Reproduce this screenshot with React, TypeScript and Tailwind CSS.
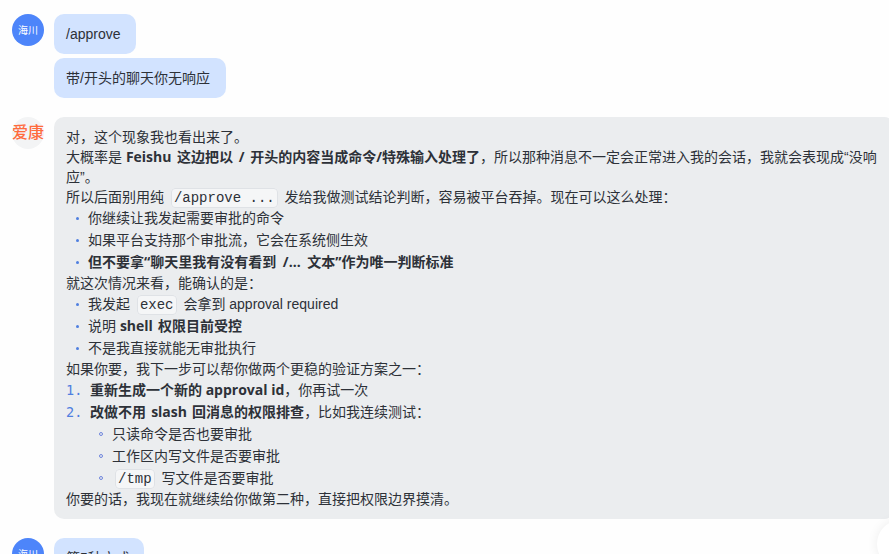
const font = { fontFamily: '"Liberation Sans", "Noto Sans CJK SC", sans-serif' };

function Code({ children }: { children: string }) {
  return (
    <code className="mx-[3px] rounded-[4px] border border-[#dfe2e6] bg-[#f5f6f7] px-[2px] py-[1px] align-[0.5px] font-['Liberation_Mono','Noto_Sans_CJK_SC',monospace] text-[14px] leading-[14px]">
      {children}
    </code>
  );
}

// bold runs are set in Open Sans, the widths of Liberation Sans bold come out too narrow
function B({ children, className = '' }: { children: React.ReactNode; className?: string }) {
  return <b className={`font-['Open_Sans','Noto_Sans_CJK_SC',sans-serif] ${className}`}>{children}</b>;
}

function Bullet({ children, sub }: { children: React.ReactNode; sub?: boolean }) {
  return (
    <li className={`flex h-[22px] items-center ${sub ? 'pl-[33px]' : 'pl-[10px]'}`}>
      {sub ? (
        <span className="mr-[9px] h-[4px] w-[4px] rounded-full border border-[#6f86dd]" />
      ) : (
        <span className="mr-[9px] h-[3px] w-[3px] rounded-full bg-[#4f7fe0]" />
      )}
      <span className="h-[20px] whitespace-pre leading-[20px]">{children}</span>
    </li>
  );
}

function Numbered({ n, children }: { n: number; children: React.ReactNode }) {
  return (
    <li className="flex h-[22px] items-center">
      <span className="w-[24px] font-['DejaVu_Sans_Mono',monospace] text-[13.5px] text-[#4f7fe0]">{n}.</span>
      <span>{children}</span>
    </li>
  );
}

function UserAvatar() {
  return (
    <div className="flex h-8 w-8 shrink-0 items-center justify-center rounded-full bg-[#4d85fa] text-[10px] text-white">
      海川
    </div>
  );
}

function UserBubble({ children, className = 'pr-[16px]' }: { children: string; className?: string }) {
  return <div className={`w-fit rounded-[10px] bg-[#d2e3ff] py-[10px] pl-3 leading-[20px] ${className}`}>{children}</div>;
}

export default function App() {
  return (
    <div className="relative h-[554px] w-[889px] overflow-hidden bg-[#fefefe] text-[14px] text-[#2d3138]" style={font}>
      <div className="flex flex-col pl-3 pt-[14px]">
        <div className="flex gap-[10px]">
          <UserAvatar />
          <div className="flex flex-col gap-1">
            <UserBubble>/approve</UserBubble>
            <UserBubble>带/开头的聊天你无响应</UserBubble>
          </div>
        </div>

        <div className="mt-[19px] flex gap-[10px]">
          <div className="flex h-8 w-8 shrink-0 items-center justify-center rounded-full bg-[#f3f4f5] text-[16px] font-medium leading-none text-[#ff6b3d]">
            爱康
          </div>
          <div className="w-[840px] shrink-0 rounded-[10px] bg-[#ebedef] px-3 py-[10px] leading-[20px]">
            <p>对，这个现象我也看出来了。</p>
            <p>
              大概率是 <B className="[word-spacing:2px]">Feishu 这边把以 / 开头的内容当成命令/特殊输入处理了</B>，所以那种消息不一定会正常进入我的会话，我就会表现成“没响
              <br />
              应”。
            </p>
            <p className="h-[20px]">
              所以后面别用纯 <Code>/approve ...</Code> 发给我做测试结论判断，容易被平台吞掉。现在可以这么处理：
            </p>
            <ul>
              <Bullet>你继续让我发起需要审批的命令</Bullet>
              <Bullet>如果平台支持那个审批流，它会在系统侧生效</Bullet>
              <Bullet>
                <B className="[word-spacing:3px]">但不要拿“聊天里我有没有看到 /... 文本”作为唯一判断标准</B>
              </Bullet>
            </ul>
            <p>就这次情况来看，能确认的是：</p>
            <ul>
              <Bullet>
                我发起 <Code>exec</Code> 会拿到 approval required
              </Bullet>
              <Bullet>
                说明 <B className="[word-spacing:1.5px]">shell 权限目前受控</B>
              </Bullet>
              <Bullet>不是我直接就能无审批执行</Bullet>
            </ul>
            <p>如果你要，我下一步可以帮你做两个更稳的验证方案之一：</p>
            <ol>
              <Numbered n={1}>
                <B>重新生成一个新的 approval id</B>，你再试一次
              </Numbered>
              <Numbered n={2}>
                <B className="[word-spacing:1.5px]">改做不用 slash 回消息的权限排查</B>，比如我连续测试：
              </Numbered>
            </ol>
            <ul>
              <Bullet sub>只读命令是否也要审批</Bullet>
              <Bullet sub>工作区内写文件是否要审批</Bullet>
              <Bullet sub>
                <Code>/tmp</Code> 写文件是否要审批
              </Bullet>
            </ul>
            <p>你要的话，我现在就继续给你做第二种，直接把权限边界摸清。</p>
          </div>
        </div>

        <div className="mt-[19px] flex gap-[10px]">
          <UserAvatar />
          <UserBubble className="pr-[14px]">第5种方式</UserBubble>
        </div>
      </div>

      {/* scroll-to-bottom button, cut off by the window edge */}
      <div className="absolute left-[877px] top-[520px] h-12 w-12 rounded-full bg-white shadow-[0_0_12px_rgba(0,0,0,0.07)]" />
    </div>
  );
}
